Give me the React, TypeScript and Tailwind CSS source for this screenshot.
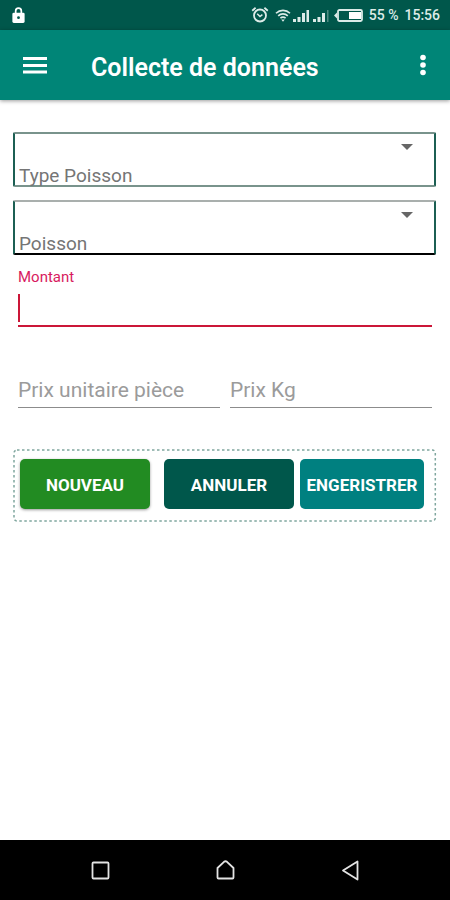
import { useState } from "react";

interface DropdownFieldProps {
  id: string;
  label: string;
  className: string;
}

interface PriceFieldProps {
  id: string;
  label: string;
}

function StatusBar() {
  return (
    <div className="flex h-[30px] items-center justify-between bg-[#00574b] pr-2.5 pl-3 text-white">
      <svg width="13" height="16" viewBox="0 0 13 17" aria-hidden="true">
        <path d="M3.5 7V4.2a3 3 0 0 1 6 0V7" fill="none" stroke="currentColor" strokeWidth="1.8" />
        <rect x="0" y="6" width="13" height="11" rx="1.5" fill="currentColor" />
        <circle cx="6.5" cy="11.3" r="1.5" fill="#00574b" />
      </svg>
      <div className="flex items-center text-[#dcebe8]">
        {/* alarm */}
        <svg width="18" height="18" viewBox="0 0 18 18" fill="none" stroke="currentColor" aria-hidden="true">
          <circle cx="9" cy="9.5" r="6" strokeWidth="1.8" />
          <path d="M1.2 4.7 4.6 1.8M16.8 4.7l-3.4-2.9" strokeWidth="1.8" />
          <path d="M6.2 7.8 9 10.6l2.4-2" strokeWidth="1.5" />
        </svg>
        {/* wifi */}
        <svg className="ml-1.5" width="16" height="16" viewBox="0 0 16 16" fill="none" stroke="currentColor" aria-hidden="true">
          <path d="M1 6.2a10 10 0 0 1 14 0" strokeWidth="1.6" />
          <path d="M3.2 8.8a7 7 0 0 1 9.6 0" strokeWidth="1.6" />
          <path d="M5.4 11.2a4 4 0 0 1 5.2 0" strokeWidth="1.6" />
          <path d="M6.2 12.4h3.6L8 14.8z" fill="currentColor" stroke="none" />
        </svg>
        {/* sim 1 + sim 2 */}
        <svg className="ml-0.5" width="37" height="13" viewBox="0 0 37 13" fill="currentColor" aria-hidden="true">
          <path d="M0 10h3v3H0zM4.5 8h3v5h-3zM9 4h3v9H9zM13.5 1H16v12h-2.5z" />
          <path d="M20 10h3v3h-3zM24.5 8h3v5h-3zM29 4h3v9h-3z" />
          <path d="M34 1h1.5v12H34z" opacity="0.35" />
        </svg>
        <svg className="ml-1" width="29" height="13" viewBox="0 0 29 13" aria-hidden="true">
          <path d="M0 6.5 3 3.5v6z" fill="currentColor" />
          <rect x="4" y="1" width="24" height="11" rx="1.5" fill="none" stroke="currentColor" strokeWidth="1.8" />
          <path d="M15 3h12v7H15z" fill="#fff" />
        </svg>
        <span className="ml-1.5 text-sm font-medium">55 %</span>
        <span className="ml-1.5 text-sm font-medium">15:56</span>
      </div>
    </div>
  );
}

function DropdownField({ id, label, className }: DropdownFieldProps) {
  return (
    <div className={`relative flex h-[55px] flex-col rounded-[2px] border-2 border-[#1c5f53] ${className}`}>
      <select id={id} className="h-8 w-full shrink-0 appearance-none bg-transparent px-1 outline-none">
        <option value=""></option>
      </select>
      <svg className="pointer-events-none absolute top-2.5 right-[21px]" width="12" height="6" viewBox="0 0 12 6" aria-hidden="true">
        <path d="M0 0h12L6 6z" fill="#666" />
      </svg>
      <label htmlFor={id} className="px-1 text-[19px] leading-5 text-[#757575]">
        {label}
      </label>
    </div>
  );
}

function PriceField({ id, label }: PriceFieldProps) {
  return (
    <input
      id={id}
      type="text"
      aria-label={label}
      placeholder={label}
      className="h-9 min-w-0 flex-1 border-b border-[#8c8c8c] bg-transparent text-[21px] outline-none placeholder:text-[#9b9b9b]"
    />
  );
}

export default function App() {
  const [montant, setMontant] = useState("");

  return (
    <div className="flex min-h-screen flex-col bg-white font-[Roboto,sans-serif]">
      <StatusBar />
      <header className="flex h-[70px] items-center bg-[#008577] px-[23px] text-white shadow-[0_1px_4px_rgba(0,0,0,0.4)]">
        <button type="button" aria-label="Menu">
          <svg width="24" height="18" viewBox="0 0 24 18" fill="currentColor" aria-hidden="true">
            <path d="M0 1h24v3H0zM0 8h24v3H0zM0 14.5h24v3H0z" />
          </svg>
        </button>
        <h1 className="mt-1.5 ml-11 flex-1 text-[25px] font-semibold">Collecte de données</h1>
        <button type="button" aria-label="Options">
          <svg width="8" height="22" viewBox="0 0 8 22" fill="currentColor" aria-hidden="true">
            <circle cx="4" cy="3.5" r="2.8" />
            <circle cx="4" cy="11" r="2.8" />
            <circle cx="4" cy="18.5" r="2.8" />
          </svg>
        </button>
      </header>

      <main className="flex-1 pt-8 pr-3.5 pl-[13px]">
        <form onSubmit={(e) => e.preventDefault()}>
          <div className="flex flex-col gap-[13px]">
            <DropdownField id="type-poisson" label="Type Poisson" className="border-y-[#79938c]" />
            <DropdownField id="poisson" label="Poisson" className="border-t-[#a9afad] border-b-black" />
          </div>

          <div className="pt-3 pr-1 pl-[5px]">
            <label htmlFor="montant" className="block text-[15px] leading-5 text-[#d81b60]">
              Montant
            </label>
            <div className="relative">
              <input
                id="montant"
                type="text"
                value={montant}
                onChange={(e) => setMontant(e.target.value)}
                className="block h-10 w-full border-b-2 border-[#cb1638] bg-transparent pl-1 text-[21px] caret-transparent outline-none"
              />
              {montant === "" && (
                <span className="pointer-events-none absolute top-[7px] left-0 h-7 w-0.5 bg-[#cb1638]" />
              )}
            </div>
            <div className="mt-[45px] flex gap-2.5">
              <PriceField id="prix-piece" label="Prix unitaire pièce" />
              <PriceField id="prix-kg" label="Prix Kg" />
            </div>
          </div>

          <div className="relative mt-[41px] flex py-2.5 pr-3 pl-[7px] text-[17px] font-bold text-white">
            <svg className="pointer-events-none absolute inset-0 h-full w-full overflow-visible" aria-hidden="true">
              <rect x="1" y="1" width="99.6%" height="71" rx="3" fill="none" stroke="#7fa69e" strokeWidth="1.5" strokeDasharray="2.5 2.5" />
            </svg>
            <button type="button" className="mr-3.5 h-[50px] min-w-0 flex-[130] rounded-[5px] bg-[#228b22] pt-[3px] shadow-[0_1px_3px_rgba(0,0,0,0.4)]">
              NOUVEAU
            </button>
            <button type="button" className="mr-1.5 h-[50px] min-w-0 flex-[130] rounded-[5px] bg-[#00574b] pt-[3px]">
              ANNULER
            </button>
            <button type="submit" className="h-[50px] min-w-0 flex-[124] rounded-[5px] bg-[#008080] pt-[3px]">
              ENGERISTRER
            </button>
          </div>
        </form>
      </main>

      <nav className="flex h-[60px] items-center justify-between bg-black px-[91px] text-[#e4e4e4]">
        <button type="button" aria-label="Recents">
          <svg width="19" height="19" viewBox="0 0 19 19" fill="none" stroke="currentColor" strokeWidth="1.8" aria-hidden="true">
            <rect x="1.5" y="1.5" width="16" height="16" rx="1" />
          </svg>
        </button>
        <button type="button" aria-label="Home">
          <svg width="19" height="20" viewBox="0 0 19 20" fill="none" stroke="currentColor" strokeWidth="1.8" strokeLinejoin="round" aria-hidden="true">
            <path d="M1.5 8 8 1.8q1.5-1.2 3 0L17.5 8v9.5q0 1-1 1h-14q-1 0-1-1z" />
          </svg>
        </button>
        <button type="button" aria-label="Back">
          <svg width="18" height="21" viewBox="0 0 18 21" fill="none" stroke="currentColor" strokeWidth="1.8" strokeLinejoin="round" aria-hidden="true">
            <path d="M16.5 1.5v18L2 10.5z" />
          </svg>
        </button>
      </nav>
    </div>
  );
}
